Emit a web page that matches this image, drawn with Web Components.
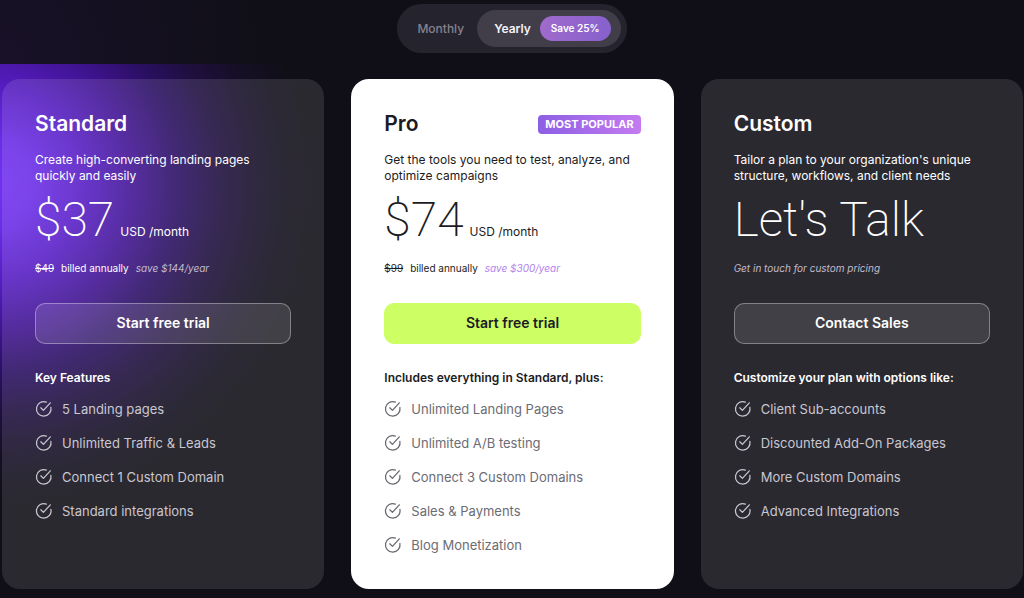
<!DOCTYPE html>
<html lang="en">
<head>
<meta charset="utf-8">
<meta name="viewport" content="width=device-width, initial-scale=1">
<title>Pricing plans</title>
<style>
  body { margin: 0; background: #100f17; font-family: Inter, "Liberation Sans", sans-serif; }
</style>
</head>
<body>
<pricing-page>
  <billing-toggle slot="toggle"></billing-toggle>

  <plan-card name="Standard" cta="Start free trial">
    <span slot="description">Create high-converting landing pages quickly and easily</span>
    <plan-price slot="price" amount="$37" unit="USD /month"></plan-price>
    <billing-note slot="billing" was="$49" term="billed annually" note="save $144/year"></billing-note>
    <span slot="heading">Key Features</span>
    <plan-feature>5 Landing pages</plan-feature>
    <plan-feature>Unlimited Traffic &amp; Leads</plan-feature>
    <plan-feature>Connect 1 Custom Domain</plan-feature>
    <plan-feature>Standard integrations</plan-feature>
  </plan-card>

  <plan-card name="Pro" cta="Start free trial" badge="MOST POPULAR" featured>
    <span slot="description">Get the tools you need to test, analyze, and optimize campaigns</span>
    <plan-price slot="price" amount="$74" unit="USD /month"></plan-price>
    <billing-note slot="billing" was="$99" term="billed annually" note="save $300/year"></billing-note>
    <span slot="heading">Includes everything in Standard, plus:</span>
    <plan-feature>Unlimited Landing Pages</plan-feature>
    <plan-feature>Unlimited A/B testing</plan-feature>
    <plan-feature>Connect 3 Custom Domains</plan-feature>
    <plan-feature>Sales &amp; Payments</plan-feature>
    <plan-feature>Blog Monetization</plan-feature>
  </plan-card>

  <plan-card name="Custom" cta="Contact Sales">
    <span slot="description">Tailor a plan to your organization's unique structure, workflows, and client needs</span>
    <plan-price slot="price" amount="Let's Talk"></plan-price>
    <billing-note slot="billing" note="Get in touch for custom pricing"></billing-note>
    <span slot="heading">Customize your plan with options like:</span>
    <plan-feature>Client Sub-accounts</plan-feature>
    <plan-feature>Discounted Add-On Packages</plan-feature>
    <plan-feature>More Custom Domains</plan-feature>
    <plan-feature>Advanced Integrations</plan-feature>
  </plan-card>
</pricing-page>

<script>
class BaseElement extends HTMLElement {
  connectedCallback() {
    if (!this.shadowRoot) this.attachShadow({ mode: 'open' }).innerHTML = this.render();
  }
  attr(name) { return this.getAttribute(name) || ''; }
}

customElements.define('pricing-page', class extends BaseElement {
  render() {
    return `
      <style>
        :host { display: block; }
        header {
          display: flex; justify-content: center; box-sizing: border-box;
          height: 64px; padding-top: 4px;
          background: radial-gradient(circle at 0 100%, #181128, transparent 280px);
        }
        main {
          display: grid; grid-template-columns: repeat(3, minmax(0, 1fr)); gap: 27px;
          padding: 15px 1px 9px 2px;
          background: radial-gradient(circle 320px at -10px 120px,
            #7333f2 0%, #6a2ce6 14%, #561dc2 30%, #421496 44%, #2c0f66 58%, #1e0f3e 72%, #150f24 86%, #100f17 100%);
        }
        @media (max-width: 760px) { main { grid-template-columns: 1fr; } }
      </style>
      <header><slot name="toggle"></slot></header>
      <main><slot></slot></main>`;
  }
});

customElements.define('billing-toggle', class extends BaseElement {
  render() {
    return `
      <style>
        :host { display: block; }
        .track {
          display: flex; box-sizing: border-box; padding: 6px;
          border-radius: 25px; background: #25232d;
        }
        button {
          display: flex; align-items: center; height: 37px; box-sizing: border-box;
          margin: 0; border: 0; border-radius: 19px; background: none;
          font-family: inherit; font-size: 12px; line-height: 16px; font-weight: 500;
          color: #85828e; padding: 0 13px 0 14px; cursor: pointer;
        }
        button[aria-pressed="true"] {
          gap: 9px; padding: 0 10px 0 17px; background: #413e49; color: #f3f1f7; font-weight: 600;
        }
        .save {
          height: 25px; line-height: 25px; padding: 0 11px; border-radius: 13px;
          font-size: 10px; font-weight: 600; color: #fff;
          background: linear-gradient(100deg, #a06bcb, #8660cd);
        }
      </style>
      <div class="track" role="group" aria-label="Billing period">
        <button type="button" aria-pressed="false">Monthly</button>
        <button type="button" aria-pressed="true"><span>Yearly</span><span class="save">Save 25%</span></button>
      </div>`;
  }
});

customElements.define('plan-card', class extends BaseElement {
  render() {
    const badge = this.attr('badge') ? `<span class="badge">${this.attr('badge')}</span>` : '';
    return `
      <style>
        :host {
          --muted: #c9c7d0; --icon: #c9c7d0; --note: #c3bccd;
          display: block; box-sizing: border-box; padding: 33px 33px 35px;
          border-radius: 18px; background: #ffffff1c; color: #fff;
        }
        :host([featured]) {
          --muted: #6c6c74; --icon: #66666e; --note: #b283ea;
          background: #fff; color: #1c1b22;
        }
        .top { display: flex; align-items: center; justify-content: space-between; height: 24px; }
        h2 { margin: 0; font-size: 21px; line-height: 24px; font-weight: 600; }
        .badge {
          padding: 0 7px; border-radius: 4px; color: #fff;
          font-size: 11px; line-height: 19px; font-weight: 700;
          background: linear-gradient(90deg, #8c5fe4, #c47bf0);
        }
        p { margin: 16px 0 8px; min-height: 32px; font-size: 12px; line-height: 16px; font-weight: 400; }
        button {
          display: block; width: 100%; height: 41px; box-sizing: border-box;
          margin: 27px 0 26px; padding: 0 0 2px; border: 1px solid #ffffff59; border-radius: 10px;
          background: #ffffff1c; color: inherit; cursor: pointer;
          font-family: inherit; font-size: 14px; font-weight: 600;
        }
        :host([featured]) button { border-color: #cdff65; background: #cdff65; }
        h3 { margin: 0 0 14px; font-size: 12px; line-height: 16px; font-weight: 600; }
        .features { display: grid; gap: 16px; }
      </style>
      <div class="top"><h2>${this.attr('name')}</h2>${badge}</div>
      <p><slot name="description"></slot></p>
      <slot name="price"></slot>
      <slot name="billing"></slot>
      <button type="button">${this.attr('cta')}</button>
      <h3><slot name="heading"></slot></h3>
      <div class="features" role="list"><slot></slot></div>`;
  }
});

customElements.define('plan-price', class extends BaseElement {
  render() {
    const unit = this.attr('unit') ? `<span class="unit">${this.attr('unit')}</span>` : '';
    return `
      <style>
        :host { display: flex; align-items: baseline; gap: 6px; height: 56px; white-space: nowrap; }
        .amount { font-family: Roboto, Inter, sans-serif; font-size: 48px; line-height: 56px; font-weight: 200; }
        .unit { font-size: 12px; line-height: 16px; }
      </style>
      <span class="amount">${this.attr('amount')}</span>${unit}`;
  }
});

customElements.define('billing-note', class extends BaseElement {
  render() {
    const was = this.attr('was') ? `<s>${this.attr('was')}</s>` : '';
    const term = this.attr('term') ? `<span>${this.attr('term')}</span>` : '';
    return `
      <style>
        :host { display: flex; gap: 7px; margin-top: 12px; font-size: 10px; line-height: 16px; }
        em { color: var(--note); }
      </style>
      ${was}${term}<em>${this.attr('note')}</em>`;
  }
});

customElements.define('plan-feature', class extends BaseElement {
  connectedCallback() {
    super.connectedCallback();
    this.setAttribute('role', 'listitem');
  }
  render() {
    return `
      <style>
        :host { display: flex; align-items: center; gap: 9px; color: var(--muted); font-size: 13px; line-height: 18px; }
        svg { flex: none; width: 18px; height: 18px; fill: none; stroke: var(--icon); stroke-width: 1.25; stroke-linecap: round; stroke-linejoin: round; }
      </style>
      <svg viewBox="0 0 18 18" aria-hidden="true">
        <path d="M11.4 2.1A7.3 7.3 0 1 0 15.9 7.4"/>
        <path d="M5.8 7.8 8.4 10.4 15.3 2.8"/>
      </svg>
      <span><slot></slot></span>`;
  }
});
</script>
</body>
</html>
